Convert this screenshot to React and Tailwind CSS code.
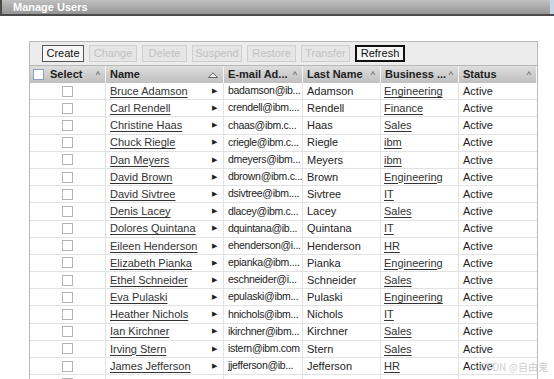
import React from 'react';

const users = [
  ['Bruce Adamson', 'badamson@ib...', 'Adamson', 'Engineering'],
  ['Carl Rendell', 'crendell@ibm....', 'Rendell', 'Finance'],
  ['Christine Haas', 'chaas@ibm.c...', 'Haas', 'Sales'],
  ['Chuck Riegle', 'criegle@ibm.c...', 'Riegle', 'ibm'],
  ['Dan Meyers', 'dmeyers@ibm...', 'Meyers', 'ibm'],
  ['David Brown', 'dbrown@ibm.c...', 'Brown', 'Engineering'],
  ['David Sivtree', 'dsivtree@ibm....', 'Sivtree', 'IT'],
  ['Denis Lacey', 'dlacey@ibm.c...', 'Lacey', 'Sales'],
  ['Dolores Quintana', 'dquintana@ib...', 'Quintana', 'IT'],
  ['Eileen Henderson', 'ehenderson@i...', 'Henderson', 'HR'],
  ['Elizabeth Pianka', 'epianka@ibm....', 'Pianka', 'Engineering'],
  ['Ethel Schneider', 'eschneider@i...', 'Schneider', 'Sales'],
  ['Eva Pulaski', 'epulaski@ibm...', 'Pulaski', 'Engineering'],
  ['Heather Nichols', 'hnichols@ibm...', 'Nichols', 'IT'],
  ['Ian Kirchner', 'ikirchner@ibm...', 'Kirchner', 'Sales'],
  ['Irving Stern', 'istern@ibm.com', 'Stern', 'Sales'],
  ['James Jefferson', 'jjefferson@ib...', 'Jefferson', 'HR'],
  ['', '', '', ''],
];

const buttons = [
  ['Create', 'w-[42px]'],
  ['Change', 'w-[48px]'],
  ['Delete', 'w-[45px]'],
  ['Suspend', 'w-[50px]'],
  ['Restore', 'w-[49px]'],
  ['Transfer', 'w-[49px]'],
  ['Refresh', 'w-[50px]'],
];

function Caret() {
  return <span className="text-[9px] font-normal text-[#555] leading-none pt-[2px]">^</span>;
}

function HeadCell({ w, children }) {
  return (
    <div className={`${w} h-full flex items-center justify-between pl-[4px] pr-[5px] border-r border-[#f4f4f4] font-bold`}>
      <span className="whitespace-nowrap">{children}</span>
      <Caret />
    </div>
  );
}

export default function App() {
  return (
    <div className="w-[554px] h-[379px] overflow-hidden bg-white font-['Liberation_Sans',Arial,sans-serif] text-[11px] text-[#222] relative">
      <div className="flex h-[16px]">
        <div className="flex-1 h-full bg-gradient-to-b from-[#c0c0c0] to-[#959595] border-l-2 border-b-2 border-[#4a4a4a] flex items-center pl-[11px]">
          <span className="text-white font-bold text-[11px] leading-none">Manage Users</span>
        </div>
        <div className="w-[4px] h-full bg-[#c8d4e6] border-b-2 border-[#4a4a4a]" />
      </div>

      <div className="ml-[29px] mt-[25px] w-[509px]">
        <div className="h-[24px] bg-[#ececec] border border-[#b8b8b8] border-b-0 flex items-center gap-[5px] pl-[12px]">
          {buttons.map(([b, w]) => {
            const on = b === 'Create';
            const focus = b === 'Refresh';
            return (
              <div
                key={b}
                className={`${w} h-[17px] flex items-center justify-center leading-none text-[11px] ${
                  focus
                    ? 'bg-[#f4f4f4] border-2 border-[#111] text-[#111]'
                    : on
                    ? 'bg-[#f6f6f6] border border-[#555] text-[#111]'
                    : 'bg-[#e6e6e6] border border-[#cfcfcf] text-[#c2c2c2]'
                }`}
              >
                {b}
              </div>
            );
          })}
        </div>

        <div className="border border-[#b8b8b8]">
          <div className="h-[17px] flex bg-gradient-to-b from-[#dedede] to-[#bfbfbf] text-[#222]">
            <div className="w-[76px] h-full flex items-center justify-between pl-[3px] pr-[5px] border-r border-[#f4f4f4] font-bold">
              <span className="flex items-center gap-[6px]">
                <span className="w-[11px] h-[11px] bg-white border border-[#8aa0c8]" />
                Select
              </span>
              <Caret />
            </div>
            <div className="w-[118px] h-full flex items-center justify-between pl-[4px] pr-[5px] border-r border-[#f4f4f4] font-bold">
              <span>Name</span>
              <svg width="10" height="6" viewBox="0 0 10 6">
                <path d="M0.5 5.5 L5 0.8 L9.5 5.5 Z" fill="#eee" stroke="#555" strokeWidth="0.9" />
              </svg>
            </div>
            <HeadCell w="w-[79px]">E-mail Ad...</HeadCell>
            <HeadCell w="w-[78px]">Last Name</HeadCell>
            <HeadCell w="w-[78px]">Business ...</HeadCell>
            <HeadCell w="w-[78px]">Status</HeadCell>
          </div>

          {users.map(([name, email, last, dept], i) => (
            <div key={i} className="h-[17.2px] flex border-b border-[#e2e2e2]">
              <div className="w-[76px] h-full flex items-center justify-center border-r border-[#e2e2e2]">
                <span className="w-[11px] h-[11px] border border-[#b4b4b4] bg-white" />
              </div>
              <div className="w-[118px] h-full flex items-center justify-between pl-[4px] pr-[6px] border-r border-[#e2e2e2]">
                <span className="underline text-[#333] underline-offset-2">{name}</span>
                {name && <span className="text-[7px] text-[#222]">▶</span>}
              </div>
              <div className="w-[79px] h-full flex items-center pl-[4px] border-r border-[#e2e2e2] whitespace-nowrap overflow-hidden text-[10.5px] tracking-[-0.3px]">
                {email}
              </div>
              <div className="w-[78px] h-full flex items-center pl-[4px] border-r border-[#e2e2e2]">{last}</div>
              <div className="w-[78px] h-full flex items-center pl-[3px] border-r border-[#e2e2e2]">
                <span className="underline text-[#333] underline-offset-2">{dept}</span>
              </div>
              <div className="w-[78px] h-full flex items-center pl-[4px]">{name ? 'Active' : ''}</div>
            </div>
          ))}
        </div>
      </div>

      <div className="absolute right-[6px] bottom-[5px] text-[10px] text-[#d0d0d0] font-['Noto_Sans_CJK_SC',sans-serif]">
        CSDN @自由鬼
      </div>
    </div>
  );
}
